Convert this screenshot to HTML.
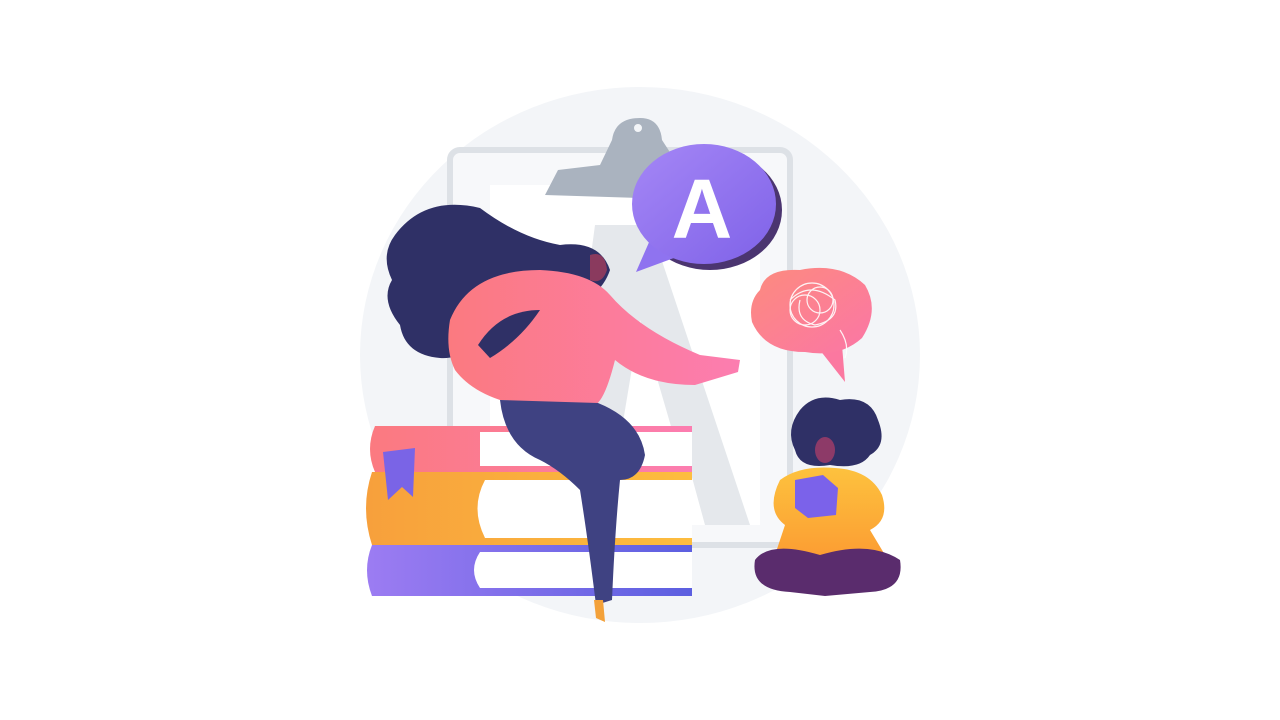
<!DOCTYPE html>
<html><head><meta charset="utf-8"><style>html,body{margin:0;padding:0;background:#fff;width:1280px;height:720px;overflow:hidden}</style></head>
<body>
<svg width="1280" height="720" viewBox="0 0 1280 720" xmlns="http://www.w3.org/2000/svg">
<defs>
<linearGradient id="pink" x1="0" y1="0" x2="1" y2="0"><stop offset="0" stop-color="#fb7a80"/><stop offset="1" stop-color="#fc7db0"/></linearGradient>
<linearGradient id="purp" x1="0" y1="0" x2="1" y2="1"><stop offset="0" stop-color="#a587f6"/><stop offset="1" stop-color="#7f62e8"/></linearGradient>
<linearGradient id="orng" x1="0" y1="0" x2="1" y2="0"><stop offset="0" stop-color="#f7a03c"/><stop offset="1" stop-color="#fdbd3f"/></linearGradient>
<linearGradient id="bpur" x1="0" y1="0" x2="1" y2="0"><stop offset="0" stop-color="#9c7cf2"/><stop offset="1" stop-color="#5c5fe0"/></linearGradient>
<linearGradient id="yel" x1="0" y1="0" x2="0" y2="1"><stop offset="0" stop-color="#fdc23e"/><stop offset="1" stop-color="#fc9e33"/></linearGradient>
<linearGradient id="brain" x1="0" y1="0" x2="1" y2="1"><stop offset="0" stop-color="#fc8b7e"/><stop offset="1" stop-color="#fb76a6"/></linearGradient>
</defs>
<ellipse cx="640" cy="355" rx="280" ry="268" fill="#f3f5f8"/>
<!-- clipboard -->
<rect x="450" y="150" width="340" height="395" rx="10" fill="#f7f8fa" stroke="#dde1e6" stroke-width="6"/>
<rect x="490" y="185" width="270" height="340" fill="#ffffff"/>
<path d="M595 225 L650 225 L750 525 L705 525 L690 470 L615 470 L605 525 L555 525 Z" fill="#e5e8ec"/>
<path d="M620 440 L640 320 L675 440 Z" fill="#fff"/>
<path d="M545 195 L558 170 L600 165 L612 140 Q615 118 640 118 Q660 118 662 140 L675 160 L705 168 L700 200 Z" fill="#aab3bf"/>
<circle cx="638" cy="128" r="4" fill="#f3f5f8"/>
<!-- A bubble -->
<ellipse cx="710" cy="210" rx="72" ry="60" fill="#4b3570"/>
<path d="M650 240 L636 272 L682 255 Z" fill="#8f73f0"/>
<ellipse cx="704" cy="204" rx="72" ry="60" fill="url(#purp)"/>
<text x="702" y="238" font-family="Liberation Sans,sans-serif" font-weight="bold" font-size="84" fill="#fff" text-anchor="middle">A</text>
<!-- brain bubble -->
<path d="M812 340 L845 382 L842 345 Z" fill="#fb78a0"/>
<path d="M760 290 Q765 268 800 270 Q840 262 865 285 Q880 310 862 338 Q840 358 805 352 Q765 352 752 322 Q748 302 760 290 Z" fill="url(#brain)"/>
<g fill="none" stroke="#fff" stroke-width="1.2" opacity="0.9">
<circle cx="812" cy="305" r="22"/><circle cx="805" cy="310" r="15"/><circle cx="820" cy="300" r="13"/><path d="M790 300 Q810 280 835 300 Q840 320 815 325 Q795 320 800 300 M840 330 Q850 345 845 358"/>
</g>
<!-- books -->
<path d="M372 545 L692 545 L692 596 L372 596 Q362 570 372 545 Z" fill="url(#bpur)"/>
<path d="M480 552 L692 552 L692 588 L480 588 Q468 570 480 552 Z" fill="#fff"/>
<path d="M372 472 L692 472 L692 545 L372 545 Q360 508 372 472 Z" fill="url(#orng)"/>
<path d="M485 480 L692 480 L692 538 L485 538 Q470 508 485 480 Z" fill="#fff"/>
<path d="M375 426 L692 426 L692 472 L375 472 Q365 449 375 426 Z" fill="url(#pink)"/>
<path d="M480 432 L692 432 L692 466 L480 466 Z" fill="#fff"/>
<path d="M383 452 L415 448 L413 497 L402 487 L388 500 Z" fill="#7a64e6"/>
<!-- woman hair -->
<path d="M395 235 Q425 195 480 208 Q520 238 560 245 Q600 240 610 270 Q600 300 560 310 Q520 330 480 325 Q470 360 440 358 Q405 355 400 325 Q380 300 392 280 Q380 255 395 235 Z" fill="#2f3066"/>
<!-- sweater -->
<path d="M450 320 Q470 270 540 270 Q590 272 610 295 Q640 330 700 355 L740 360 L738 372 L695 385 Q645 385 615 360 Q605 400 595 405 L500 400 Q470 390 455 370 Q445 350 450 320 Z" fill="url(#pink)"/>
<path d="M478 345 Q500 310 540 310 Q520 340 490 358 Z" fill="#2f3066"/>
<path d="M590 255 Q605 250 607 270 Q602 285 590 280 Z" fill="#8a3a5e"/>
<!-- pants -->
<path d="M500 400 L598 403 Q640 420 645 455 Q640 480 620 480 Q615 530 612 600 L596 605 Q588 540 580 490 Q560 470 540 460 Q505 445 500 400 Z" fill="#3f4282"/>
<path d="M594 600 L603 600 L605 622 L596 618 Z" fill="#f3a13a"/>
<!-- child -->
<path d="M800 410 Q815 392 840 400 Q870 395 878 420 Q888 445 870 455 Q860 470 830 465 Q800 470 795 450 Q785 430 800 410 Z" fill="#2f3066"/>
<ellipse cx="825" cy="450" rx="10" ry="13" fill="#8d3a68"/>
<path d="M780 480 Q800 465 835 468 Q870 470 882 495 Q890 520 870 530 L885 555 L775 555 L785 525 Q765 510 780 480 Z" fill="url(#yel)"/>
<path d="M795 480 L823 475 L838 488 L836 515 L808 518 L795 508 Z" fill="#7b62ea"/>
<path d="M755 560 Q770 540 820 555 Q870 540 900 560 Q905 590 870 592 L825 596 L790 592 Q750 590 755 560 Z" fill="#5a2c6d"/>
</svg>
</body></html>
